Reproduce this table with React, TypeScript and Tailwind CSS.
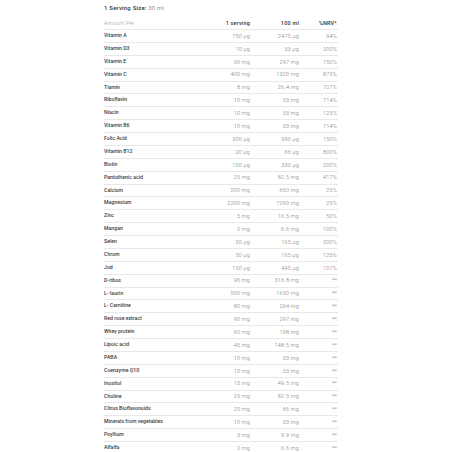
import React from "react";

const rows: [string, string, string, string][] = [
  ["Vitamin A", "750 µg", "2475 µg", "94%"],
  ["Vitamin D3", "10 µg", "33 µg", "200%"],
  ["Vitamin E", "90 mg", "297 mg", "750%"],
  ["Vitamin C", "400 mg", "1320 mg", "875%"],
  ["Tiamin", "8 mg", "26.4 mg", "727%"],
  ["Riboflavin", "10 mg", "33 mg", "714%"],
  ["Niacin", "10 mg", "33 mg", "125%"],
  ["Vitamin B6", "10 mg", "33 mg", "714%"],
  ["Folic Acid", "300 µg", "990 µg", "150%"],
  ["Vitamin B12", "20 µg", "66 µg", "800%"],
  ["Biotin", "100 µg", "330 µg", "200%"],
  ["Pantothenic acid", "25 mg", "82.5 mg", "417%"],
  ["Calcium", "200 mg", "660 mg", "25%"],
  ["Magnesium", "2200 mg", "7260 mg", "25%"],
  ["Zinc", "5 mg", "16.5 mg", "50%"],
  ["Mangan", "2 mg", "6.6 mg", "100%"],
  ["Selen", "50 µg", "165 µg", "200%"],
  ["Chrom", "50 µg", "165 µg", "125%"],
  ["Jod", "150 µg", "495 µg", "107%"],
  ["D-ribos", "96 mg", "316.8 mg", "**"],
  ["L- taurin", "500 mg", "1650 mg", "**"],
  ["L- Carnitine", "80 mg", "264 mg", "**"],
  ["Red rose extract", "90 mg", "297 mg", "**"],
  ["Whey protein", "60 mg", "198 mg", "**"],
  ["Lipoic acid", "45 mg", "148.5 mg", "**"],
  ["PABA", "10 mg", "33 mg", "**"],
  ["Coenzyme Q10", "10 mg", "33 mg", "**"],
  ["Inositol", "15 mg", "49.5 mg", "**"],
  ["Choline", "25 mg", "82.5 mg", "**"],
  ["Citrus Bioflavonoids", "20 mg", "66 mg", "**"],
  ["Minerals from vegetables", "10 mg", "33 mg", "**"],
  ["Psyllium", "3 mg", "9.9 mg", "**"],
  ["Alfalfa", "2 mg", "6.6 mg", "**"],
];

export default function App() {
  return (
    <div
      className="w-[452px] h-[452px] bg-white overflow-hidden pl-[104px] pt-[3px]"
      style={{ fontFamily: "Roboto, Lato, 'Noto Sans', sans-serif" }}
    >
      <div className="w-[234px]">
        <div className="h-[10px] leading-[10px] text-[6px] tracking-[0.2px] text-[#333]">
          <span className="font-medium">1 Serving Size:</span>{" "}
          <span className="font-light text-[#555]">30 ml</span>
        </div>
        <div className="mt-[4px] flex items-center h-[13px] border-b border-[#e8e8e8] text-[5.5px] tracking-[0.2px]">
          <div className="flex-1 text-[#999] font-light">Amount Per</div>
          <div className="w-[60px] text-right font-medium text-[#333]">1 serving</div>
          <div className="w-[49px] text-right font-medium text-[#333]">100 ml</div>
          <div className="w-[39px] text-right pr-[1px] font-medium text-[#333]">%NRV*</div>
        </div>
        {rows.map((r) => (
          <div
            key={r[0]}
            className="flex items-center h-[12.875px] border-b border-[#e8e8e8] text-[5.5px] tracking-[0.2px]"
          >
            <div className="flex-1 text-[5.2px] tracking-[0px] font-medium text-[#404040]">{r[0]}</div>
            <div className="w-[60px] text-right font-light text-[#777]">{r[1]}</div>
            <div className="w-[49px] text-right font-light text-[#777]">{r[2]}</div>
            <div className="w-[39px] text-right pr-[1px] font-light text-[#777]">{r[3]}</div>
          </div>
        ))}
      </div>
    </div>
  );
}
